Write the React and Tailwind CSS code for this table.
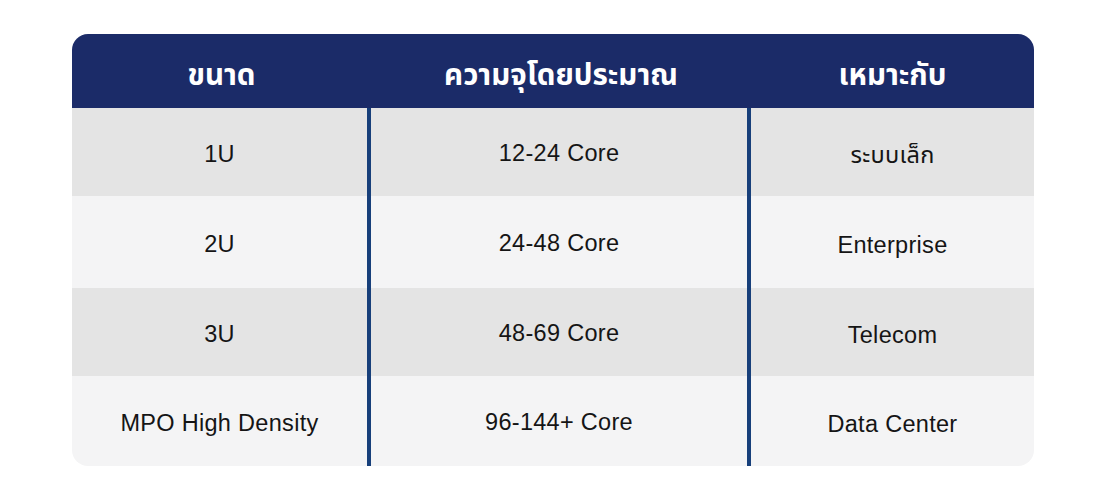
const rows = [
  { size: "1U", cap: "12-24 Core", use: "ระบบเล็ก", h: "h-[88px]", bg: "bg-[#e4e4e4]" },
  { size: "2U", cap: "24-48 Core", use: "Enterprise", h: "h-[92px]", bg: "bg-[#f4f4f5]" },
  { size: "3U", cap: "48-69 Core", use: "Telecom", h: "h-[88px]", bg: "bg-[#e4e4e4]" },
  { size: "MPO High Density", cap: "96-144+ Core", use: "Data Center", h: "h-[90px]", bg: "bg-[#f4f4f5]" },
];

export default function App() {
  return (
    <div className="h-[500px] w-full bg-white pt-[34px] pl-[72px] font-['Liberation_Sans','Noto_Sans_Thai','Noto_Sans',sans-serif]">
      <div className="w-[962px] overflow-hidden rounded-[16px]">
        {/* header */}
        <div className="grid h-[74px] grid-cols-[299px_380px_283px] bg-[#1b2b68] pt-[8px] text-[29.5px] font-bold text-white">
          <div className="flex items-center justify-center">ขนาด</div>
          <div className="flex items-center justify-center">ความจุโดยประมาณ</div>
          <div className="flex items-center justify-center">เหมาะกับ</div>
        </div>

        {rows.map((r) => (
          <div
            key={r.size}
            className={`grid grid-cols-[299px_380px_283px] text-[23.5px] tracking-[0.3px] text-[#151515] ${r.h} ${r.bg}`}
          >
            <div className="flex items-center justify-center border-r-4 border-[#173f7a] pt-[6px]">{r.size}</div>
            <div className="flex items-center justify-center border-r-4 border-[#173f7a] pt-[3px]">{r.cap}</div>
            <div className="flex items-center justify-center pt-[8px]">{r.use}</div>
          </div>
        ))}
      </div>
    </div>
  );
}
